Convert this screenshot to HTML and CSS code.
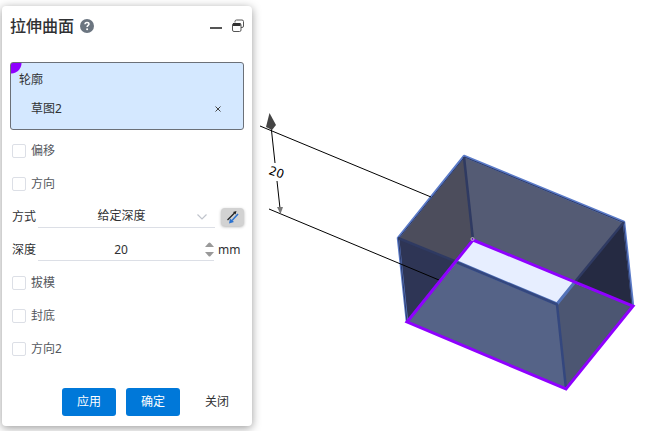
FILE: index.html
```html
<!DOCTYPE html>
<html lang="zh-CN">
<head>
    <meta charset="UTF-8">
    <meta name="viewport" content="width=device-width, initial-scale=1.0">
    <title>拉伸曲面</title>
    <link rel="stylesheet" href="styles.css">
</head>
<body>
    <form class="panel">
        <header class="panel-header">
            <h1>拉伸曲面</h1>
            <button type="button" class="icon-btn" aria-label="帮助">
                <svg width="14" height="14" viewBox="0 0 14 14">
                    <circle cx="7" cy="7" r="7" fill="#6b7580"/>
                    <path d="M5 5.3C5 4 5.9 3.4 7 3.4S9 4.1 9 5.1C9 6.4 7.1 6.5 7.1 8" fill="none" stroke="#fff" stroke-width="1.5"/>
                    <circle cx="7.1" cy="10.3" r="1" fill="#fff"/>
                </svg>
            </button>
            <div class="window-tools">
                <button type="button" class="icon-btn" aria-label="最小化">
                    <svg width="12" height="14" viewBox="0 0 12 14">
                        <path d="M0 9H12" stroke="#555" stroke-width="2"/>
                    </svg>
                </button>
                <button type="button" class="icon-btn" aria-label="还原">
                    <svg width="12" height="14" viewBox="0 0 12 14" fill="none" stroke="#555">
                        <path d="M3 3.5V2.5Q3 1 4.5 1H10Q11.500 1 11.500 2.500V7Q11.500 8.500 10 8.500H9"/>
                        <rect x="0.5" y="4.5" width="8.5" height="8" rx="1.500"/>
                        <path d="M1 5.500H8.500" stroke="#333" stroke-width="3"/>
                    </svg>
                </button>
            </div>
        </header>

        <section class="profile">
            <h2>轮廓</h2>
            <div class="profile-item">
                <span>草图2</span>
                <button type="button" class="icon-btn" aria-label="移除">
                    <svg width="6" height="6" viewBox="0 0 6 6">
                        <path d="M0.5 0.5L5.5 5.5M5.5 0.5L0.5 5.5" stroke="#444"/>
                    </svg>
                </button>
            </div>
        </section>

        <label class="row check"><input type="checkbox">偏移</label>
        <label class="row check"><input type="checkbox">方向</label>
        <div class="row">
            <label for="mode">方式</label>
            <div class="field">
                <select id="mode">
                    <option>给定深度</option>
                </select>
                <svg class="chevron" width="10" height="6" viewBox="0 0 10 6">
                    <path d="M0.5 0.5L5 5L9.5 0.5" fill="none" stroke="#c0c4cc" stroke-width="1.2"/>
                </svg>
            </div>
            <button type="button" class="flip" aria-label="反向">
                <svg width="14" height="14" viewBox="0 0 14 14">
                    <path d="M1.500 10L8.500 3" stroke="#222" stroke-width="1.3"/>
                    <path d="M10.500 1L9.500 4.500L7 2Z" fill="#222"/>
                    <path d="M12 4L6 10.500" stroke="#2b72d0" stroke-width="1.5"/>
                    <path d="M3 13.500L4 8.500L8 12Z" fill="#2b72d0"/>
                </svg>
            </button>
        </div>
        <div class="row">
            <label for="depth">深度</label>
            <div class="field">
                <input type="text" id="depth" value="20">
                <svg class="spinner" width="9" height="15" viewBox="0 0 9 15" fill="#999">
                    <path d="M0 5L3.5 1Q4.5 0 5.5 1L9 5Z"/>
                    <path d="M0 10L3.5 14Q4.5 15 5.5 14L9 10Z"/>
                </svg>
            </div>
            <span class="unit">mm</span>
        </div>
        <label class="row check"><input type="checkbox">拔模</label>
        <label class="row check"><input type="checkbox">封底</label>
        <label class="row check"><input type="checkbox">方向2</label>

        <footer class="actions">
            <button type="button" class="btn primary">应用</button>
            <button type="button" class="btn primary">确定</button>
            <button type="button" class="btn">关闭</button>
        </footer>
    </form>

    <main class="viewport">
        <svg class="model" viewBox="254 0 393 431" preserveAspectRatio="xMinYMin meet">
            <!-- faces -->
            <path d="M464 156L398 238L457 262L473 240Z" fill="#4c4d5c"/>
            <path d="M398 238L457 262L407 322Z" fill="#2e3555"/>
            <path d="M464 156L624 222L574 283L473 240Z" fill="#545b74"/>
            <path d="M624 222L633 306L574 283Z" fill="#252a42"/>
            <path d="M473 240L574 283L557 304L457 262Z" fill="#e7eeff"/>
            <path d="M407 322L457 262L557 304L566 389Z" fill="#556387"/>
            <path d="M557 304L574 283L633 306L566 389Z" fill="#4c5672"/>
            <!-- edges -->
            <g fill="none" stroke-linejoin="round">
                <path d="M407 322L398 238L464 156L624 222L633 306" stroke="#5b7bc8" stroke-width="2.5"/>
                <path d="M407 322L398.5 238.5L464.5 157L623.5 222.5L632 306" stroke="#2e3b68"/>
                <path d="M464 157L473 240M398 238L457 262M574 283L624 222" stroke="#2f3a62" stroke-width="2.5"/>
                <path d="M457 262L557 304L574 283" stroke="#5372b8" stroke-width="3"/>
                <path d="M457 262.5L557 304.5L566 389" stroke="#34477e" stroke-width="2.5"/>
            </g>
            <!-- dimension -->
            <g stroke="#000">
                <path d="M260 126L431 197M269 209L439 280"/>
                <path d="M271 126L275 163M277 181L280.5 213"/>
            </g>
            <path d="M269.5 113L276 125L272 130L266 127Z" fill="#444"/>
            <path d="M277 207L283 207L280.5 214Z" fill="#777"/>
            <text class="dim-text" transform="translate(268 174) rotate(18)">20</text>
            <path d="M473 240L633 306L566 389L407 322Z" fill="none" stroke="#8f00ff" stroke-width="3"/>
            <circle cx="472.5" cy="239" r="1.5" fill="none" stroke="#bbb"/>
        </svg>
    </main>
</body>
</html>
```

FILE: styles.css
```css
* {
    box-sizing: border-box;
}
body {
    margin: 0;
    display: flex;
    align-items: flex-start;
    background: #fff;
    color: #303133;
    font-family: "Noto Sans", "Noto Sans CJK SC", sans-serif;
    font-size: 12px;
    line-height: 18px;
}
h1, h2 {
    margin: 0;
    font-weight: 400;
}
button, input, select {
    margin: 0;
    padding: 0;
    border: 0;
    background: none;
    color: inherit;
    font: inherit;
}
svg {
    display: block;
}
.panel {
    flex: 0 0 250px;
    margin: 6px 2px 4px;
    padding: 8px 8px 10px;
    border-radius: 4px;
    background: #fff;
    box-shadow: 0 2px 10px rgba(0, 0, 0, 0.4);
}
.panel-header {
    display: flex;
    align-items: center;
    gap: 6px;
    height: 24px;
    margin-bottom: 24px;
}
.panel-header h1 {
    font-size: 16px;
    font-weight: 500;
    line-height: 24px;
}
.window-tools {
    display: flex;
    gap: 10px;
    margin-left: auto;
}
.profile {
    height: 68px;
    margin-bottom: 4px;
    padding: 8px;
    border: 1px solid #6b7078;
    border-radius: 3px;
    background: radial-gradient(circle at 0 0, #8f00ff 10px, #d4e8ff 11px);
}
.profile h2 {
    font-size: 12px;
    line-height: 18px;
}
.profile-item {
    display: flex;
    align-items: center;
    justify-content: space-between;
    margin-top: 11px;
    padding: 0 14px 0 12px;
}
.row {
    display: flex;
    align-items: center;
    height: 33px;
    padding-left: 2px;
}
.check {
    gap: 5px;
    color: #55585e;
}
.check input {
    appearance: none;
    width: 14px;
    height: 14px;
    border: 1px solid #dcdfe6;
    border-radius: 2px;
    background: #fff;
}
.check input:checked {
    background: #0078d9;
}
.field {
    flex: 1;
    position: relative;
    margin-left: 2px;
}
.field select, .field input {
    display: block;
    appearance: none;
    width: 100%;
    height: 22px;
    padding-right: 10px;
    border-bottom: 1px solid #dcdfe6;
    border-radius: 0;
    text-align: center;
    text-align-last: center;
}
.chevron {
    position: absolute;
    right: 8px;
    top: 8px;
    pointer-events: none;
}
.spinner {
    position: absolute;
    right: 0;
    top: 3px;
}
.flip {
    display: grid;
    place-items: center;
    width: 23px;
    height: 18px;
    margin-left: 6px;
    border-radius: 4px;
    background: #d2d2d2;
    box-shadow: 0 1px 3px rgba(0, 0, 0, 0.3);
}
.unit {
    width: 30px;
    padding-left: 4px;
}
.actions {
    display: flex;
    justify-content: flex-end;
    gap: 10px;
    margin-top: 23px;
}
.btn {
    width: 54px;
    height: 28px;
    border-radius: 3px;
}
.primary {
    background: #0078d9;
    color: #fff;
}
.viewport {
    flex: 1;
    min-width: 0;
}
.model {
    width: 100%;
}
.dim-text {
    font-family: "DejaVu Sans", sans-serif;
    font-size: 12px;
}
```
